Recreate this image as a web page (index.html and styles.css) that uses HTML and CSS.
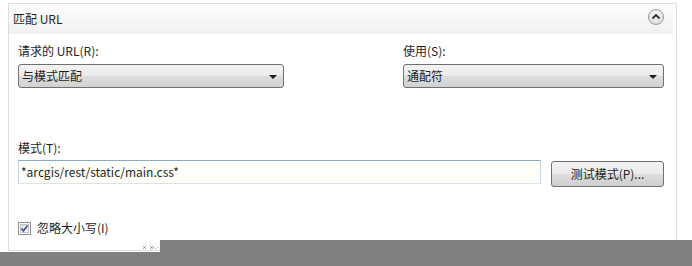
FILE: index.html
```html
<!DOCTYPE html>
<html lang="zh-CN">
<head>
<meta charset="utf-8">
<title>匹配 URL</title>
<link rel="stylesheet" href="styles.css">
</head>
<body>
<div class="page">
  <section class="panel">
    <header class="panel-head">
      <span class="panel-title">匹配 URL</span>
      <span class="collapse">
        <svg width="18" height="18" viewBox="0 0 18 18">
          <defs>
            <radialGradient id="cg" cx="50%" cy="35%" r="65%">
              <stop offset="0" stop-color="#ffffff"/>
              <stop offset="1" stop-color="#d8d8d8"/>
            </radialGradient>
          </defs>
          <circle cx="9" cy="9" r="7.5" fill="url(#cg)" stroke="#9a9a9a" stroke-width="1"/>
          <path d="M5.5 10.5 L9 7 L12.5 10.5" fill="none" stroke="#2a2a2a" stroke-width="1.8" stroke-linejoin="miter"/>
        </svg>
      </span>
    </header>
    <div class="panel-body">
      <div class="row-top">
        <div class="field field-left">
          <label class="lbl">请求的 URL(R):</label>
          <div class="combo"><span>与模式匹配</span><span class="arrow"></span></div>
        </div>
        <div class="field field-right">
          <label class="lbl">使用(S):</label>
          <div class="combo"><span>通配符</span><span class="arrow"></span></div>
        </div>
      </div>
      <div class="field field-pattern">
        <label class="lbl">模式(T):</label>
        <div class="pattern-row">
          <div class="input">*arcgis/rest/static/main.css*</div>
          <div class="button">测试模式(P)...</div>
        </div>
      </div>
      <div class="check-row">
        <span class="checkbox">
          <svg width="13" height="13" viewBox="0 0 13 13">
            <defs>
              <linearGradient id="kb" x1="0" y1="0" x2="1" y2="1">
                <stop offset="0" stop-color="#dcdcdc"/>
                <stop offset="1" stop-color="#ffffff"/>
              </linearGradient>
            </defs>
            <rect x="0.5" y="0.5" width="12" height="12" fill="#fff" stroke="#8e8f8f"/>
            <rect x="2.5" y="2.5" width="8" height="8" fill="url(#kb)" stroke="#c4c4c4"/>
            <path d="M3.5 6.5 L5.5 9 L9.5 3.5" fill="none" stroke="#3b4fa0" stroke-width="1.6"/>
          </svg>
        </span>
        <span class="check-label">忽略大小写(I)</span>
      </div>
    </div>
  </section>
  <div class="shade shade-right"></div>
  <div class="shade shade-bottom"></div>
  <svg class="grip" width="16" height="5" viewBox="0 0 16 5">
    <rect x="0" y="0" width="1" height="1" fill="#999"/>
    <rect x="2" y="0" width="1" height="1" fill="#999"/>
    <rect x="1" y="1" width="1" height="1" fill="#777"/>
    <rect x="0" y="2" width="1" height="1" fill="#aaa"/>
    <rect x="2" y="2" width="1" height="1" fill="#aaa"/>
    <rect x="7" y="0" width="1" height="1" fill="#999"/>
    <rect x="9" y="0" width="1" height="1" fill="#999"/>
    <rect x="8" y="1" width="1" height="1" fill="#777"/>
    <rect x="10" y="1" width="1" height="1" fill="#999"/>
    <rect x="7" y="2" width="1" height="1" fill="#aaa"/>
    <rect x="9" y="2" width="1" height="1" fill="#aaa"/>
    <rect x="8" y="3" width="1" height="1" fill="#bbb"/>
    <rect x="12" y="2" width="1" height="1" fill="#bbb"/>
    <rect x="14" y="1" width="1" height="1" fill="#bbb"/>
  </svg>
</div>
</body>
</html>
```

FILE: styles.css
```css
html, body {
  margin: 0;
  padding: 0;
  background: #ffffff;
}

body {
  font-family: "Noto Sans CJK SC", "Noto Sans", "Liberation Sans", sans-serif;
  font-size: 12px;
  color: #1e1e1e;
}

.page {
  position: relative;
  width: 692px;
  height: 266px;
  overflow: hidden;
  padding-top: 3px;
  box-sizing: border-box;
}

.panel {
  margin-left: 8px;
  width: 669px;
  height: 248px;
  box-sizing: border-box;
  border: 1px solid #dcdfe2;
  background: #ffffff;
  display: flex;
  flex-direction: column;
}

.panel-head {
  height: 30px;
  display: flex;
  align-items: center;
  justify-content: space-between;
  padding: 0 8px 0 4px;
  background: linear-gradient(#fdfdfd, #f1f1f1);
  margin-right: 3px;
}

.panel-title {
  line-height: 16px;
  margin-top: -1px;
}

.collapse {
  display: flex;
  margin-top: -5px;
}

.panel-body {
  padding: 9px 12px 0 9px;
  display: flex;
  flex-direction: column;
}

.row-top {
  display: flex;
  justify-content: space-between;
}

.field {
  display: flex;
  flex-direction: column;
}

.field-left {
  width: 266px;
}

.field-right {
  width: 261px;
}

.lbl {
  line-height: 16px;
  height: 16px;
  margin-bottom: 5px;
  white-space: nowrap;
}

.combo {
  height: 24px;
  box-sizing: border-box;
  border: 1px solid #707070;
  border-radius: 3px;
  background: linear-gradient(#f3f3f3 0%, #ebebeb 50%, #dddddd 51%, #d2d2d2 100%);
  display: flex;
  align-items: center;
  justify-content: space-between;
  padding: 0 6px 0 3px;
  line-height: 16px;
}

.arrow {
  width: 0;
  height: 0;
  border-left: 4px solid transparent;
  border-right: 4px solid transparent;
  border-top: 4px solid #1a1a1a;
  margin-top: 1px;
}

.field-pattern {
  margin-top: 52px;
}

.field-pattern .lbl {
  margin-bottom: 4px;
}

.pattern-row {
  display: flex;
  align-items: flex-start;
  gap: 10px;
}

.input {
  flex: 1;
  height: 24px;
  box-sizing: border-box;
  border: 1px solid #abadb3;
  border-top-color: #8fa9bd;
  border-left-color: #c5d3dd;
  border-bottom-color: #dde3e8;
  border-right-color: #c5d3dd;
  background: #fffff9;
  padding: 0 2px;
  line-height: 21px;
  white-space: nowrap;
}

.button {
  width: 113px;
  height: 26px;
  margin-top: 1px;
  box-sizing: border-box;
  border: 1px solid #707070;
  border-radius: 3px;
  background: linear-gradient(#f2f2f2 0%, #ebebeb 50%, #dddddd 51%, #cfcfcf 100%);
  display: flex;
  align-items: center;
  justify-content: center;
  line-height: 16px;
  white-space: nowrap;
}

.check-row {
  margin-top: 33px;
  height: 16px;
  display: flex;
  align-items: center;
  gap: 6px;
}

.checkbox {
  display: flex;
}

.check-label {
  line-height: 16px;
}

.shade {
  position: absolute;
  background: #808080;
}

.shade-right {
  left: 160px;
  right: 0;
  top: 240px;
  bottom: 0;
}

.shade-bottom {
  left: 0;
  right: 0;
  top: 252px;
  bottom: 0;
}

.grip {
  position: absolute;
  left: 143px;
  top: 246px;
}
```
